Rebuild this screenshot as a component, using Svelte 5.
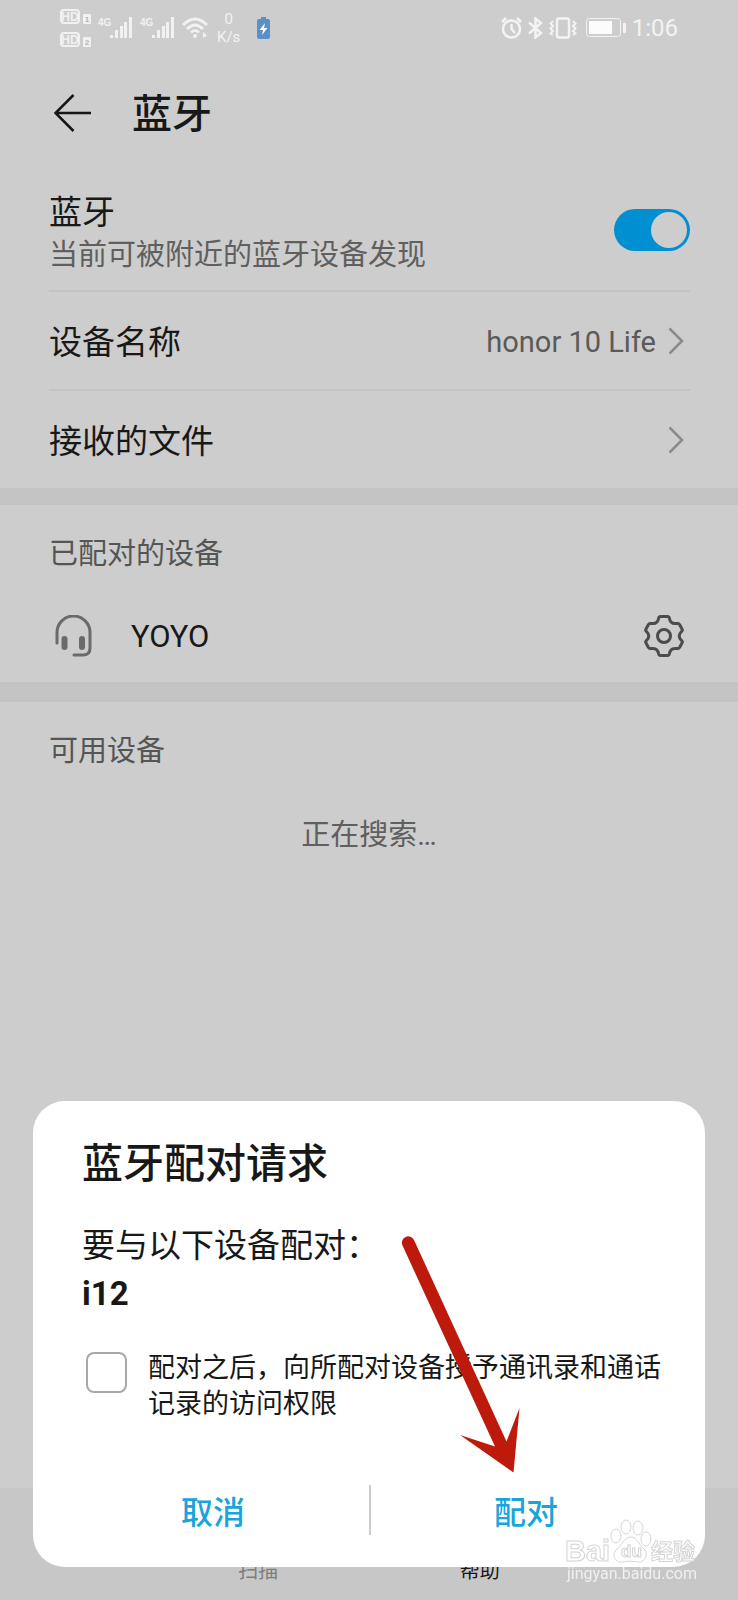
<script>
	let bluetoothOn = $state(true);
	let shareContacts = $state(false);
	let dialogOpen = $state(true);

	const rows = [
		{ label: '设备名称', value: 'honor 10 Life' },
		{ label: '接收的文件', value: '' }
	];

	const closeDialog = () => {
		dialogOpen = false;
	};
</script>

{#snippet hd(n)}
	<svg width="31" height="15" viewBox="0 0 31 15">
		<rect x="1" y="1" width="18" height="13" rx="3" fill="none" stroke="#f1f1f1" stroke-width="2" />
		<text x="10" y="12" text-anchor="middle" class="hd-text">HD</text>
		<rect x="23" y="5" width="8" height="10" rx="1" fill="#f1f1f1" />
		<text x="27" y="13" text-anchor="middle" class="hd-num">{n}</text>
	</svg>
{/snippet}

{#snippet signal()}
	<svg width="35" height="22" viewBox="0 0 35 22" fill="#f1f1f1">
		<text x="0" y="9" class="net-text">4G</text>
		<rect x="12" y="18" width="3" height="3" />
		<rect x="17" y="13" width="3" height="8" />
		<rect x="22" y="9" width="3" height="12" />
		<rect x="26" y="5" width="3" height="16" />
		<rect x="31" y="0" width="3" height="21" />
	</svg>
{/snippet}

<div class="page">
	<div class="status">
		<div class="status-left">
			<div class="hd-stack">
				{@render hd(1)}
				{@render hd(2)}
			</div>
			{@render signal()}
			{@render signal()}
			<svg width="26" height="22" viewBox="0 0 26 22" fill="none" stroke="#f1f1f1" stroke-width="3">
				<path d="M1 8 Q13 -4 25 8" />
				<path d="M5 12 Q13 4 21 12" />
				<path d="M9 15.5 Q13 11.5 17 15.5" stroke-width="2.5" />
				<circle cx="13" cy="19" r="2" fill="#f1f1f1" stroke="none" />
				<path d="M21 15 L25 18.500 L21 21 Z" fill="#f1f1f1" stroke="none" />
			</svg>
			<div class="speed"><span>0</span><span>K/s</span></div>
			<svg width="13" height="23" viewBox="0 0 13 23">
				<rect x="4" y="0" width="5" height="3" fill="#5b8fc7" />
				<rect x="0" y="2" width="13" height="20" rx="2" fill="#5b8fc7" />
				<path d="M8 6 L2.500 13 H6 L5 18 L10.500 11 H7 Z" fill="#fff" />
			</svg>
		</div>
		<div class="status-right">
			<svg width="21" height="22" viewBox="0 0 21 22" fill="none" stroke="#f3f3f3" stroke-width="2.500">
				<circle cx="10.500" cy="12" r="8.500" />
				<path d="M10.500 7 V12 L14 16 M1 5 L5 1 M16 1 L20 5" />
			</svg>
			<svg width="15" height="22" viewBox="0 0 15 22" fill="none" stroke="#f3f3f3" stroke-width="2.500">
				<path d="M1 5.500 L13 16 L7.500 20.500 V1.500 L13 6 L1 16.500" />
			</svg>
			<svg width="28" height="22" viewBox="0 0 28 22" fill="none" stroke="#f3f3f3" stroke-width="2.500">
				<rect x="8" y="1.500" width="12" height="19" rx="2" />
				<path
					stroke-width="2"
					d="M4 4 L1.500 6.500 L4 9 L1.500 11.500 L4 14 L1.500 16.500 L4 18 M24 4 L26.500 6.500 L24 9 L26.500 11.500 L24 14 L26.500 16.500 L24 18"
				/>
			</svg>
			<svg class="battery" width="40" height="20" viewBox="0 0 40 20">
				<rect x="0.500" y="0.500" width="34" height="18" rx="3" fill="none" stroke="#f3f3f3" />
				<rect x="3" y="3" width="23" height="13" fill="#fcfcfc" />
				<rect x="37" y="5" width="3" height="10" rx="1" fill="#f3f3f3" />
			</svg>
			<span class="clock">1:06</span>
		</div>
	</div>

	<header>
		<button class="back" aria-label="返回">
			<svg width="38" height="38" viewBox="0 0 38 38" fill="none" stroke="#161616" stroke-width="2.500">
				<path d="M19.500 1 L1.500 19 L19.500 37 M1.500 19 H37" />
			</svg>
		</button>
		<h1>蓝牙</h1>
	</header>

	<main>
		<section class="settings">
			<label class="row toggle-row">
				<span class="text">
					<span class="label">蓝牙</span>
					<span class="hint">当前可被附近的蓝牙设备发现</span>
				</span>
				<input type="checkbox" role="switch" class="switch" bind:checked={bluetoothOn} />
			</label>
			{#each rows as row}
				<button class="row">
					<span class="label">{row.label}</span>
					<span class="value">{row.value}</span>
					<svg width="16" height="28" viewBox="0 0 16 28" fill="none" stroke="#8a8a8a" stroke-width="2.500">
						<path d="M1.500 1.500 L14 14 L1.500 26.500" />
					</svg>
				</button>
			{/each}
		</section>

		<section class="paired">
			<h2>已配对的设备</h2>
			<div class="device">
				<svg width="37" height="42" viewBox="0 0 37 42" fill="none" stroke="#6a6a6a" stroke-width="3" stroke-linecap="round">
					<path d="M2 28 V17.500 A16.500 16.500 0 0 1 35 17.500 V33 Q35 40 28 40 H19" />
					<path d="M9.500 24 V32 M27 24 V32" stroke-width="6" />
				</svg>
				<span class="label">YOYO</span>
				<button class="gear" aria-label="设备设置">
					<svg width="40" height="42" viewBox="0 0 40 42" fill="none" stroke="#4c4c4c" stroke-width="3" stroke-linejoin="round">
						<path
							d="M16.500 1.500 H23.500 Q25 1.500 25.300 3 C26 7 28 9 32 8.500 H34 Q35 8.500 35.700 9.700 L38 14 Q38.800 15.500 37.500 16.500 C34.500 19.500 34.500 22.500 37.500 25.500 Q38.800 26.500 38 28 L35.700 32.300 Q35 33.500 34 33.500 H32 C28 33 26 35 25.300 39 Q25 40.500 23.500 40.500 H16.500 Q15 40.500 14.700 39 C14 35 12 33 8 33.500 H6 Q5 33.500 4.300 32.300 L2 28 Q1.200 26.500 2.500 25.500 C5.500 22.500 5.500 19.500 2.500 16.500 Q1.200 15.500 2 14 L4.300 9.700 Q5 8.500 6 8.500 H8 C12 9 14 7 14.700 3 Q15 1.500 16.500 1.500 Z"
						/>
						<circle cx="20" cy="21" r="6.500" />
					</svg>
				</button>
			</div>
		</section>

		<section class="available">
			<h2>可用设备</h2>
			<p>正在搜索…</p>
		</section>
	</main>

	<nav>
		<button class="scan" disabled>扫描</button>
		<button>帮助</button>
	</nav>
</div>

{#if dialogOpen}
	<div class="dialog" role="dialog" aria-labelledby="pair-title">
		<h2 id="pair-title">蓝牙配对请求</h2>
		<p class="message">要与以下设备配对：</p>
		<p class="message name">i12</p>
		<label class="consent">
			<input type="checkbox" bind:checked={shareContacts} />
			<span>配对之后，向所配对设备授予通讯录和通话记录的访问权限</span>
		</label>
		<div class="actions">
			<button onclick={closeDialog}>取消</button>
			<button onclick={closeDialog}>配对</button>
		</div>

		<svg class="arrow" width="124" height="246" viewBox="0 0 124 246" fill="#bd1a0b">
			<path
				d="M2.500 15.500 A6.200 6.200 0 0 1 14 10 L106.500 211.500 L119.500 178 L113.500 242.500 L60 205 L95 216.500 Z"
			/>
		</svg>
		<svg class="watermark" width="136" height="66" viewBox="0 0 136 66" fill="#fff" stroke="#d4d4d4">
			<text x="0" y="43" class="brand">Bai</text>
			<ellipse cx="51" cy="18" rx="5" ry="7" />
			<ellipse cx="61" cy="9" rx="5" ry="7" />
			<ellipse cx="73" cy="10" rx="5" ry="7" />
			<ellipse cx="81" cy="21" rx="5" ry="7" />
			<path d="M66 19 C72 19 74 27 79 31 C84 36 80 45 73 44 C68 43 62 43 58 44 C49 45 46 36 52 31 C57 27 59 19 66 19 Z" />
			<text x="56" y="39" class="du">du</text>
			<text x="86" y="41" class="jing">经验</text>
			<text x="2" y="61" class="site">jingyan.baidu.com</text>
		</svg>
	</div>
{/if}

<style>
	:global(body) {
		background: #cdcdcd;
		font-family: Roboto, 'Noto Sans CJK SC', sans-serif;
		color: #181818;
	}

	h1,
	h2,
	p {
		margin: 0;
	}

	button {
		border: none;
		background: none;
		padding: 0;
		font: inherit;
		color: inherit;
		cursor: pointer;
	}

	svg {
		display: block;
		flex: none;
	}

	.page {
		display: flex;
		flex-direction: column;
		min-height: 100vh;
	}

	.status {
		display: flex;
		justify-content: space-between;
		align-items: center;
		height: 56px;
		padding: 0 60px;
		color: #f3f3f3;
	}

	.status-left,
	.status-right {
		display: flex;
		align-items: center;
		gap: 7px;
	}

	.status-right {
		gap: 6px;
	}

	.hd-stack {
		display: flex;
		flex-direction: column;
		gap: 8px;
	}

	.hd-text {
		font: bold 12px 'Liberation Sans', sans-serif;
		fill: #f1f1f1;
	}

	.hd-num {
		font: bold 8px 'Liberation Sans', sans-serif;
		fill: #b4b4b4;
	}

	.net-text {
		font: bold 10px 'Liberation Sans', sans-serif;
	}

	.speed {
		display: flex;
		flex-direction: column;
		align-items: center;
		margin: 0 10px 0 2px;
		font-size: 15px;
		line-height: 18px;
	}

	.battery {
		margin-left: 3px;
	}

	.clock {
		font-size: 24px;
	}

	header {
		display: flex;
		align-items: center;
		gap: 40px;
		height: 114px;
		padding: 0 48px 0 54px;
	}

	h1 {
		padding-top: 4px;
		font-size: 40px;
		font-weight: 500;
		line-height: 56px;
	}

	.settings {
		padding: 0 48px 0 49px;
	}

	.row {
		display: flex;
		align-items: center;
		width: 100%;
		height: 97px;
		text-align: left;
	}

	.row + .row {
		border-top: 2px solid #c3c3c3;
		box-sizing: content-box;
	}

	.toggle-row {
		justify-content: space-between;
		height: 120px;
	}

	.text {
		display: flex;
		flex-direction: column;
		padding-top: 6px;
	}

	.label {
		font-size: 33px;
		line-height: 44px;
	}

	.row > .label {
		padding-top: 4px;
	}

	.hint {
		font-size: 29px;
		line-height: 40px;
		color: #5f5f5f;
	}

	.switch {
		appearance: none;
		flex: none;
		width: 76px;
		height: 42px;
		margin: 0;
		padding: 3px;
		border-radius: 21px;
		background: #a5a5a5;
	}

	.switch::before {
		content: '';
		display: block;
		width: 36px;
		height: 36px;
		border-radius: 50%;
		background: #cdcdcd;
	}

	.switch:checked {
		background: #0090d2;
	}

	.switch:checked::before {
		margin-left: auto;
	}

	.value {
		margin-left: auto;
		padding: 2px 12px 0 0;
		font-size: 29px;
		color: #5a5a5a;
	}

	.row svg {
		margin-right: 6px;
	}

	.paired,
	.available {
		padding: 0 54px 0 49px;
		border-top: 17px solid #c3c3c3;
	}

	.available {
		padding-right: 49px;
		border-top-width: 20px;
	}

	section h2 {
		padding-top: 29px;
		font-size: 29px;
		font-weight: 400;
		line-height: 40px;
		color: #555;
	}

	.device {
		display: flex;
		align-items: center;
		height: 92px;
		padding: 16px 0 0 6px;
	}

	.device .label {
		flex: 1;
		padding: 2px 0 0 39px;
		font-size: 31px;
	}

	.available p {
		padding-top: 44px;
		font-size: 29px;
		line-height: 40px;
		text-align: center;
		color: #5f5f5f;
	}

	nav {
		display: grid;
		grid-template-columns: 1fr 1fr;
		align-items: end;
		height: 112px;
		margin-top: auto;
		padding: 0 20% 15px;
		box-sizing: border-box;
		background: #c7c7c7;
		font-size: 20px;
		line-height: 28px;
	}

	nav .scan {
		color: #7d7d7d;
	}

	.dialog {
		position: fixed;
		right: 33px;
		bottom: 33px;
		left: 33px;
		box-sizing: border-box;
		padding: 35px 24px 32px;
		border-radius: 32px;
		background: #fff;
	}

	.dialog h2 {
		padding: 0 25px;
		font-size: 41px;
		font-weight: 500;
		line-height: 56px;
	}

	.message {
		padding: 0 25px;
		font-size: 33px;
		line-height: 48px;
	}

	h2 + .message {
		margin-top: 30px;
	}

	.name {
		font-weight: 700;
	}

	.consent {
		display: flex;
		align-items: flex-start;
		gap: 21px;
		margin-top: 32px;
		padding: 0 16px 0 29px;
		font-size: 27px;
		line-height: 36px;
	}

	.consent input {
		appearance: none;
		flex: none;
		box-sizing: border-box;
		width: 41px;
		height: 41px;
		margin: 2px 0 0;
		border: 2px solid #a8a8a8;
		border-radius: 8px;
	}

	.consent input:checked {
		background: #0090d2;
	}

	.actions {
		display: grid;
		grid-template-columns: 1fr 1fr;
		margin-top: 63px;
	}

	.actions button {
		height: 50px;
		font-size: 32px;
		font-weight: 500;
		color: #1ba4dc;
	}

	.actions button + button {
		border-left: 2px solid #ccc;
	}

	.arrow {
		position: absolute;
		top: 129px;
		left: 367px;
		pointer-events: none;
	}

	.watermark {
		position: absolute;
		right: 4px;
		bottom: -17px;
		pointer-events: none;
	}

	.brand {
		font: bold 29px 'Liberation Sans', sans-serif;
	}

	.du {
		font: bold 17px 'Liberation Sans', sans-serif;
	}

	.jing {
		font: bold 22px 'Noto Sans CJK SC', sans-serif;
	}

	.site {
		font: 16px Roboto, sans-serif;
		fill: #f0f0f0;
		stroke: none;
	}
</style>
